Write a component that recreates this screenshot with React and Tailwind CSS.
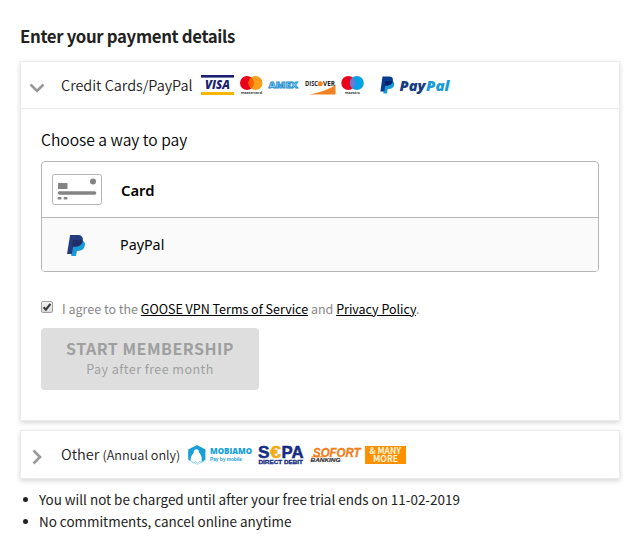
const sans = "font-['Noto_Sans_CJK_SC',sans-serif]";

function PayPalMark({ className }) {
  return (
    <svg className={className} viewBox="0 0 18 21">
      <path d="M5.6 5.5h8.2c3.4 0 4.6 2.2 4 5.1-.8 3.9-3.4 5.400-7 5.400h-.9L9 21H4.2z" fill="#179bd7" />
      <path d="M3.1 0h7.400c3.800 0 5.900 1.900 5.300 5.500-.8 4.400-3.800 6-7.700 6H6.200l-1.300 7.500H0z" fill="#253b80" />
      <path d="M6.300 5h7.500c.8 0 1.400.2 1.900.5-.8 4.400-3.700 6-7.600 6H5.200z" fill="#222d65" />
    </svg>
  );
}

function CardLogos() {
  return (
    <svg className="ml-2 h-6 w-[252px]" viewBox="200 73 252 24" fontFamily="Open Sans, sans-serif">
      <rect x="201" y="75" width="33" height="2.600" fill="#1a1f71" />
      <rect x="201" y="92" width="33" height="3" fill="#f7b600" />
      <text x="205" y="89" fontSize="11.500" fontWeight="800" fontStyle="italic" fill="#1a1f71" textLength="25" lengthAdjust="spacingAndGlyphs">VISA</text>

      <circle cx="247" cy="83" r="7" fill="#eb001b" />
      <circle cx="255.500" cy="83" r="7" fill="#f79e1b" />
      <path d="M251.250 77.400a7 7 0 0 1 0 11.200a7 7 0 0 1 0-11.200" fill="#ff5f00" />
      <text x="241" y="93.500" fontSize="3.800" fontWeight="700" fill="#333" textLength="21" lengthAdjust="spacingAndGlyphs">mastercard</text>

      <text x="268.500" y="88.300" fontSize="9.500" fontWeight="800" fill="#a5d6f1" stroke="#168bd0" strokeWidth="0.800" textLength="29.500" lengthAdjust="spacingAndGlyphs">AMEX</text>

      <path d="M309 94.500q17-3 26.500-9.500v9.500z" fill="#f58220" />
      <text x="305" y="86" fontSize="6.200" fontWeight="700" fill="#222" textLength="13" lengthAdjust="spacingAndGlyphs">DISC</text>
      <circle cx="320.200" cy="83.800" r="2.500" fill="#f58220" />
      <text x="323" y="86" fontSize="6.200" fontWeight="700" fill="#222" textLength="12" lengthAdjust="spacingAndGlyphs">VER</text>

      <circle cx="348.300" cy="83" r="7" fill="#eb001b" />
      <circle cx="356.800" cy="83" r="7" fill="#00a2e5" />
      <path d="M352.550 77.400a7 7 0 0 1 0 11.200a7 7 0 0 1 0-11.200" fill="#7375cf" />
      <text x="345" y="93.500" fontSize="3.800" fontWeight="700" fill="#333" textLength="15" lengthAdjust="spacingAndGlyphs">maestro</text>

      <path d="M384.500 81h6.500c2.700 0 3.600 1.700 3.200 3.800-.6 3-2.600 4.200-5.400 4.200h-1l-.8 4.500h-3.700z" fill="#179bd7" />
      <path d="M382.500 76.500h6.500c3 0 4.300 1.500 3.900 4-.5 3.500-2.900 5-6 5h-1.500l-1 6h-4z" fill="#063b8f" />
      <path d="M385.500 81h5.500q1 0 1.800.3c-.8 3-3 4.200-5.900 4.200h-2.200z" fill="#06206b" />
      <text x="399.500" y="91" fontSize="14.500" fontWeight="800" fontStyle="italic" fill="#173b80" textLength="26" lengthAdjust="spacingAndGlyphs">Pay</text>
      <text x="426" y="91" fontSize="14.500" fontWeight="800" fontStyle="italic" fill="#179bd7" textLength="23.500" lengthAdjust="spacingAndGlyphs">Pal</text>
    </svg>
  );
}

function OtherLogos() {
  return (
    <svg className="ml-[7px] h-7 w-[220px]" viewBox="187 440.500 220 28" fontFamily="Liberation Sans, sans-serif">
      <path d="M197 444.500l8.500 4.500v10l-4 3c1-5-.5-8-2.500-10 .5-2-1-3.500-3-3.200-2 .2-2.500 2-2.300 3.700-2.500 2-3.500 5-3 8.500l-2.500-2v-10z" fill="#169fd9" />
      <path d="M205.500 451v9l-8 4-7-3.500" fill="none" stroke="#a8dcf2" strokeWidth="0.800" />
      <path d="M191.500 461l2 1.500 2-1.500 2 2 2-2 2 1" fill="none" stroke="#69c3e8" strokeWidth="0.700" />
      <text x="210" y="453.800" fontSize="7.800" fontWeight="800" fontFamily="Open Sans, sans-serif" fill="#169fd9" textLength="42" lengthAdjust="spacingAndGlyphs">MOBIAMO</text>
      <text x="210" y="460.500" fontSize="5.900" fontWeight="700" fill="#169fd9" textLength="32" lengthAdjust="spacingAndGlyphs">Pay by mobile</text>

      <text x="258" y="457" fontSize="16.500" fontWeight="700" fill="#142c82" stroke="#142c82" strokeWidth="0.500" textLength="11.500" lengthAdjust="spacingAndGlyphs">S</text>
      <text x="270" y="457" fontSize="16.500" fontWeight="700" fill="#f0ad16" stroke="#f0ad16" strokeWidth="0.500" textLength="11" lengthAdjust="spacingAndGlyphs">€</text>
      <text x="281.500" y="457" fontSize="16.500" fontWeight="700" fill="#142c82" stroke="#142c82" strokeWidth="0.500" textLength="22" lengthAdjust="spacingAndGlyphs">PA</text>
      <text x="258.500" y="463" fontSize="5.200" fontWeight="700" fill="#142c82" stroke="#142c82" strokeWidth="0.300" textLength="44.500" lengthAdjust="spacingAndGlyphs">DIRECT DEBIT</text>

      <text x="313" y="456" fontSize="12" fontWeight="700" fontStyle="italic" fill="#ef7d19" stroke="#ef7d19" strokeWidth="0.300" textLength="47.500" lengthAdjust="spacingAndGlyphs">SOFORT</text>
      <path d="M311.500 456.300h12" stroke="#ef7d19" strokeWidth="1" />
      <text x="310.500" y="461.600" fontSize="5.800" fontWeight="700" fontStyle="italic" fill="#333" stroke="#333" strokeWidth="0.200" textLength="30" lengthAdjust="spacingAndGlyphs">BANKING</text>

      <rect x="365" y="445.500" width="41" height="18" fill="#ff9100" />
      <text x="369.500" y="453.700" fontSize="8.300" fontWeight="700" fontFamily="Noto Sans CJK SC, sans-serif" fill="#fff3df" textLength="31.500" lengthAdjust="spacingAndGlyphs">&amp; MANY</text>
      <text x="373" y="461.500" fontSize="8.300" fontWeight="700" fontFamily="Noto Sans CJK SC, sans-serif" fill="#fff3df" textLength="25" lengthAdjust="spacingAndGlyphs">MORE</text>
    </svg>
  );
}

function CardIcon() {
  return (
    <svg className="h-[31px] w-[50px]" viewBox="0 0 50 31">
      <rect x="0.500" y="0.500" width="49" height="30" rx="2" fill="#fff" stroke="#b5b5b5" />
      <rect x="6" y="9" width="9.500" height="6" rx="0.500" fill="#848484" />
      <circle cx="41" cy="7.500" r="3" fill="#848484" />
      <path d="M7.500 19h35" stroke="#848484" strokeWidth="3.600" strokeLinecap="round" />
      <rect x="5.500" y="23" width="4" height="2.400" rx="1" fill="#848484" />
      <rect x="11.500" y="23" width="4" height="2.400" rx="1" fill="#848484" />
    </svg>
  );
}

function Tick() {
  return (
    <span className="flex size-[12px] items-center justify-center rounded-[2px] border border-[#a0a0a0] bg-gradient-to-b from-[#f3f3f3] to-[#dcdcdc]">
      <svg className="size-2.5 shrink-0" viewBox="0 0 10 10">
        <path d="M1.500 5.300l2.400 2.400L8.400 1.800" fill="none" stroke="#3c3c3c" strokeWidth="2.200" />
      </svg>
    </span>
  );
}

const panel = "border border-[#ebebeb] bg-white shadow-[0_2px_5px_rgba(0,0,0,0.16)]";

export default function App() {
  return (
    <main className={`h-[546px] w-[635px] overflow-hidden bg-white pl-5 pt-6 text-[#222] ${sans}`}>
      <h1 className="h-[37px] whitespace-nowrap text-[16.800px] font-bold leading-6 tracking-[-0.340px]">Enter your payment details</h1>

      <section className={`h-[360px] w-[600px] ${panel}`}>
        <header className="flex h-[47px] items-center border-b border-[#ebebeb] pl-2">
          <svg className="mt-1.5 h-4 w-4" viewBox="0 0 16 16">
            <path d="M1.500 4.500L8 11l6.500-6.500" fill="none" stroke="#999" strokeWidth="2.600" />
          </svg>
          <span className="ml-4 w-[131px] whitespace-nowrap text-[14.500px] font-[350] leading-6 tracking-[-0.040px]">Credit Cards/PayPal</span>
          <CardLogos />
        </header>

        <div className="px-5 pt-[18px]">
          <h2 className="h-[34px] whitespace-nowrap text-[15.600px] font-[350] leading-6 text-black">Choose a way to pay</h2>
          <div className="h-[111px] w-[558px] overflow-hidden rounded-[4px] border border-[#b5b5b5] font-['Noto_Sans',sans-serif] text-[14.500px] text-black">
            <div className="flex h-14 items-center border-b border-[#b5b5b5] pl-2.5">
              <CardIcon />
              <span className="ml-[19px] text-[14.800px] font-semibold leading-6">Card</span>
            </div>
            <div className="flex h-[54px] items-center bg-[#fafafa] pl-[25px]">
              <PayPalMark className="h-[21px] w-[18px]" />
              <span className="ml-[35px] text-[14.300px] leading-6">PayPal</span>
            </div>
          </div>

          <div className="mt-[27px] flex h-[29px] items-start">
            <span className="mt-[2px]"><Tick /></span>
            <p className="ml-[9px] whitespace-nowrap text-[12.500px] leading-5 text-[#888]">
              I agree to the <a className="text-black underline">GOOSE VPN Terms of Service</a> and <a className="text-black underline">Privacy Policy</a>.
            </p>
          </div>

          <button className="flex h-[62px] w-[218px] flex-col items-center rounded-[4px] bg-[#dedede] pt-2 text-[#9f9f9f]">
            <span className="whitespace-nowrap text-[16px] font-bold leading-6 tracking-[0.500px]">START MEMBERSHIP</span>
            <span className="mt-px whitespace-nowrap text-[12.500px] leading-4 tracking-[0.450px]">Pay after free month</span>
          </button>
        </div>
      </section>

      <section className={`mt-[9px] flex h-[49px] w-[600px] items-center pl-2 ${panel}`}>
        <svg className="mt-1 h-4 w-4" viewBox="0 0 16 16">
          <path d="M4.500 1.500L11 8l-6.500 6.500" fill="none" stroke="#999" strokeWidth="2.600" />
        </svg>
        <span className="ml-4 w-[119px] whitespace-nowrap text-[14.500px] font-[350] leading-6">
          Other <span className="text-[12.700px]">(Annual only)</span>
        </span>
        <OtherLogos />
      </section>

      <ul className="mt-[9px] text-[13.450px] leading-[22px]">
        {["You will not be charged until after your free trial ends on 11-02-2019", "No commitments, cancel online anytime"].map((line) => (
          <li key={line} className="flex items-center whitespace-nowrap">
            <span className="ml-[3px] mr-[11px] size-[5px] rounded-full bg-[#222]" />
            {line}
          </li>
        ))}
      </ul>
    </main>
  );
}
